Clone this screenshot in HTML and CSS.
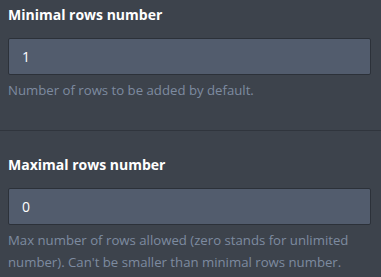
FILE: index.html
```html
<!DOCTYPE html>
<html lang="en">
<head>
<meta charset="UTF-8">
<meta name="viewport" content="width=device-width, initial-scale=1.0">
<title>Repeater settings</title>
<link rel="stylesheet" href="styles.css">
</head>
<body>
  <div class="settings">
    <div class="field field-first">
      <label class="field-label" for="minRows">Minimal rows number</label>
      <input class="field-input" type="text" id="minRows" value="1">
      <p class="field-help">Number of rows to be added by default.</p>
    </div>
    <div class="field">
      <label class="field-label" for="maxRows">Maximal rows number</label>
      <input class="field-input" type="text" id="maxRows" value="0">
      <p class="field-help">Max number of rows allowed (zero stands for unlimited number). Can't be smaller than minimal rows number.</p>
    </div>
  </div>
</body>
</html>
```

FILE: styles.css
```css
body, html {
  margin: 0;
  padding: 0;
  height: 100%;
  background-color: #3d434c;
  font-family: "Open Sans", "Noto Sans", Arial, sans-serif;
}

.settings {
  display: flex;
  flex-direction: column;
}

.field {
  display: flex;
  flex-direction: column;
  padding: 23px 10px 29px 8px;
  border-top: 1px solid #30353d;
}

.field-first {
  padding-top: 4px;
  border-top: none;
}

.field-label {
  color: #ffffff;
  font-size: 14px;
  font-weight: 700;
  line-height: 22px;
  margin-bottom: 12px;
}

.field-input {
  box-sizing: border-box;
  height: 37px;
  width: 100%;
  padding: 0 13px;
  background-color: #525c6d;
  border: 1px solid #2c3139;
  border-radius: 2px;
  color: #ffffff;
  font-family: inherit;
  font-size: 14px;
}

.field-help {
  margin: 4px 0 0;
  color: #7d8ba0;
  font-size: 13.2px;
  line-height: 22px;
}
```
